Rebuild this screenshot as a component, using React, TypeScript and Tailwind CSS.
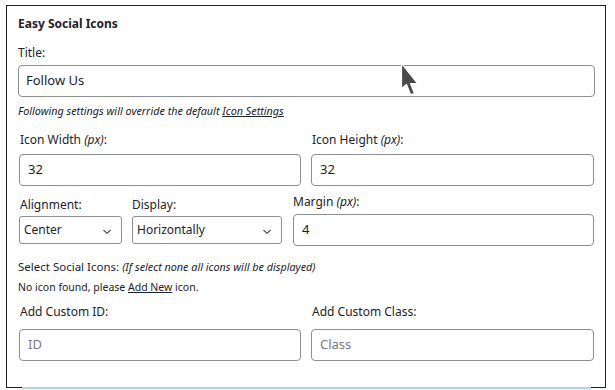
import React from "react";

const font = { fontFamily: '"Noto Sans", "Open Sans", sans-serif' };

function Chevron() {
  return (
    <svg width="10" height="6" viewBox="0 0 10 6" className="absolute right-[9px] top-[12px]">
      <path d="M1.5 1 L5 4.5 L8.5 1" fill="none" stroke="#50575e" strokeWidth="1.2" />
    </svg>
  );
}

export default function App() {
  return (
    <div className="relative w-[615px] h-[390px] bg-white text-[#1d2327] overflow-hidden" style={font}>
      <div className="ml-[6px] mt-[5px] w-[600px] h-[383px] border border-[#1e1e1e] pl-[11px] pr-[10px] pt-[9px] flex flex-col">
        <div className="text-[12px] font-bold leading-[18px] h-[18px]">Easy Social Icons</div>

        <div className="mt-[11px] text-[12px] leading-[18px] h-[18px]">Title:</div>
        <div className="mt-[3px] h-[32px] w-[577px] border border-[#8c8f94] rounded-[4px] pl-[7px] flex items-center text-[13px]">
          Follow Us
        </div>

        <div className="mt-[6px] text-[10.8px] italic leading-[16px] h-[16px]">
          Following settings will override the default <span className="underline">Icon Settings</span>
        </div>

        <div className="mt-[12px] flex gap-[10px] pl-[1px]">
          <div className="w-[282px] flex flex-col">
            <div className="pl-[1px] text-[12px] leading-[18px] h-[18px]">
              Icon Width <i>(px)</i>:
            </div>
            <div className="mt-[5px] h-[32px] border border-[#8c8f94] rounded-[4px] pl-[8px] flex items-center text-[13px]">32</div>
          </div>
          <div className="w-[283px] flex flex-col">
            <div className="pl-[1px] text-[12px] leading-[18px] h-[18px]">
              Icon Height <i>(px)</i>:
            </div>
            <div className="mt-[5px] h-[32px] border border-[#8c8f94] rounded-[4px] pl-[8px] flex items-center text-[13px]">32</div>
          </div>
        </div>

        <div className="mt-[7px] flex items-start pl-[1px]">
          <div className="w-[103px] flex flex-col mt-[3px]">
            <div className="pl-[1px] text-[12px] leading-[18px] h-[18px]">Alignment:</div>
            <div className="relative mt-[2px] h-[28px] border border-[#8c8f94] rounded-[3px] pl-[4px] flex items-center text-[12px]">
              Center
              <Chevron />
            </div>
          </div>
          <div className="ml-[10px] w-[150px] flex flex-col mt-[3px]">
            <div className="text-[12px] leading-[18px] h-[18px]">Display:</div>
            <div className="relative mt-[2px] h-[28px] border border-[#8c8f94] rounded-[3px] pl-[4px] flex items-center text-[12px]">
              Horizontally
              <Chevron />
            </div>
          </div>
          <div className="ml-[11px] w-[301px] flex flex-col">
            <div className="text-[12px] leading-[18px] h-[18px]">
              Margin <i>(px)</i>:
            </div>
            <div className="mt-[3px] h-[32px] border border-[#8c8f94] rounded-[4px] pl-[8px] flex items-center text-[13px]">4</div>
          </div>
        </div>

        <div className="mt-[12px] text-[11.5px] leading-[17px] h-[17px]">
          Select Social Icons: <i className="text-[10.8px]">(If select none all icons will be displayed)</i>
        </div>
        <div className="mt-[4px] text-[10.5px] leading-[16px] h-[16px]">
          No icon found, please <span className="underline">Add New</span> icon.
        </div>

        <div className="mt-[8px] flex gap-[10px] pl-[1px]">
          <div className="w-[282px] flex flex-col">
            <div className="pl-[1px] text-[12px] leading-[18px] h-[18px]">Add Custom ID:</div>
            <div className="mt-[8px] h-[32px] border border-[#8c8f94] rounded-[4px] pl-[8px] flex items-center text-[13px] text-[#787c82]">ID</div>
          </div>
          <div className="w-[283px] flex flex-col">
            <div className="pl-[1px] text-[12px] leading-[18px] h-[18px]">Add Custom Class:</div>
            <div className="mt-[8px] h-[32px] border border-[#8c8f94] rounded-[4px] pl-[8px] flex items-center text-[13px] text-[#787c82]">Class</div>
          </div>
        </div>
      </div>

      <div className="absolute left-[22px] top-[387px] w-[569px] h-[2px] bg-[#a8d5f2]" />

      <svg className="absolute left-[400px] top-[62px]" width="20" height="36" viewBox="-1.5 -1.5 20 36">
        <path d="M0 0 L0 25 L5 21 L9 31 L13 30 L9 20 L16 20 Z" fill="#4a4a4a" stroke="#ffffff" strokeWidth="1.2" strokeLinejoin="round" />
      </svg>
    </div>
  );
}
